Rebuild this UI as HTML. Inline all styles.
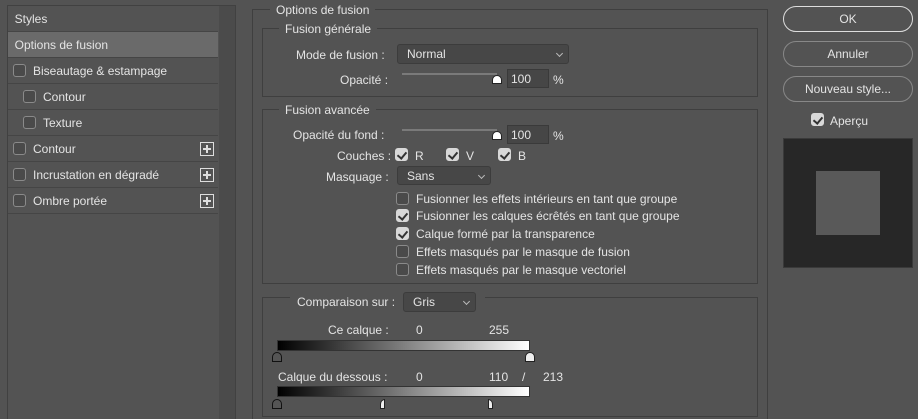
<!DOCTYPE html>
<html style="width:918px;height:419px;overflow:hidden"><head><meta charset="utf-8"><style>
*{margin:0;padding:0;box-sizing:border-box}
body{width:918px;height:419px;background:#535353;font-family:"Liberation Sans",sans-serif;font-size:12px;color:#e4e4e4;position:relative;overflow:hidden}
.a{position:absolute;white-space:nowrap}
.row{position:absolute;left:8px;width:210px;height:26px;border-bottom:1px solid #454545;line-height:27px}
.cb{position:absolute;width:13px;height:13px;border:1px solid #8a8a8a;border-radius:3px;background:#4a4a4a}
.cb.on{background:#d8d8d8;border-color:#d8d8d8}
.cb.on::after{content:"";position:absolute;left:3px;top:1px;width:4px;height:7px;border:solid #333;border-width:0 2px 2px 0;transform:rotate(40deg)}
.plus{position:absolute;left:192px;top:6px;width:14px;height:14px;border:1px solid #ddd}
.plus::before{content:"";position:absolute;left:2px;top:5px;width:8px;height:2px;background:#ddd}
.plus::after{content:"";position:absolute;left:5px;top:2px;width:2px;height:8px;background:#ddd}
.box{position:absolute;border:1px solid #3f3f3f}
.ttl{position:absolute;background:#535353;padding:0 6px;line-height:14px}
.dd{position:absolute;border:1px solid #3c3c3c;border-radius:3px;background:#474747;padding-left:9px;line-height:19px}
.dd::after{content:"";position:absolute;right:6px;top:6px;width:4px;height:4px;border:solid #bbb;border-width:0 1px 1px 0;transform:rotate(45deg)}
.inp{position:absolute;width:42px;height:19px;background:#464646;border:1px solid #3a3a3a;padding-left:3px;line-height:18px}
.track{position:absolute;height:2px;background:#7a7a7a}
.btn{position:absolute;left:783px;width:130px;height:26px;border:1px solid #888;border-radius:13px;text-align:center;line-height:25px}
.grad{position:absolute;left:277px;width:253px;height:11px;background:linear-gradient(90deg,#000,#fff);border:1px solid #333}
</style></head><body>
<div class="box" style="left:7px;top:5px;width:229px;height:420px;border-color:#414141"></div>
<div class="a" style="left:219px;top:6px;width:16px;height:413px;background:#4b4b4b"></div>
<div class="row" style="top:6px">&nbsp;&nbsp;Styles</div>
<div class="row" style="top:32px;background:#6a6a6a">&nbsp;&nbsp;Options de fusion</div>
<div class="row" style="top:58px"><div class="cb" style="left:5px;top:6px"></div><span class="a" style="left:25px">Biseautage &amp; estampage</span></div>
<div class="row" style="top:84px"><div class="cb" style="left:15px;top:6px"></div><span class="a" style="left:35px">Contour</span></div>
<div class="row" style="top:110px"><div class="cb" style="left:15px;top:6px"></div><span class="a" style="left:35px">Texture</span></div>
<div class="row" style="top:136px"><div class="cb" style="left:5px;top:6px"></div><span class="a" style="left:25px">Contour</span><div class="plus"></div></div>
<div class="row" style="top:162px"><div class="cb" style="left:5px;top:6px"></div><span class="a" style="left:25px">Incrustation en dégradé</span><div class="plus"></div></div>
<div class="row" style="top:188px"><div class="cb" style="left:5px;top:6px"></div><span class="a" style="left:25px">Ombre portée</span><div class="plus"></div></div>

<div class="box" style="left:252px;top:9px;width:516px;height:420px"></div>
<div class="ttl" style="left:270px;top:3px">Options de fusion</div>
<div class="box" style="left:262px;top:28px;width:496px;height:69px"></div>
<div class="ttl" style="left:279px;top:22px">Fusion générale</div>
<div class="a" style="left:296px;top:48px">Mode de fusion :</div>
<div class="dd" style="left:397px;top:44px;width:172px;height:20px">Normal</div>
<div class="a" style="left:340px;top:73px">Opacité :</div>
<div class="track" style="left:402px;top:73px;width:95px"></div>
<div class="a" style="left:492px;top:75px;width:10px;height:9px;background:#fff;border-radius:5px 5px 0 0;border:1px solid #222"></div>
<div class="inp" style="left:507px;top:69px">100</div>
<div class="a" style="left:553px;top:73px">%</div>

<div class="box" style="left:262px;top:109px;width:496px;height:175px"></div>
<div class="ttl" style="left:279px;top:103px">Fusion avancée</div>
<div class="a" style="left:293px;top:128px">Opacité du fond :</div>
<div class="track" style="left:402px;top:129px;width:95px"></div>
<div class="a" style="left:492px;top:131px;width:10px;height:9px;background:#fff;border-radius:5px 5px 0 0;border:1px solid #222"></div>
<div class="inp" style="left:507px;top:125px">100</div>
<div class="a" style="left:553px;top:129px">%</div>
<div class="a" style="left:337px;top:149px">Couches :</div>
<div class="cb on" style="left:395px;top:148px"></div><div class="a" style="left:415px;top:149px">R</div>
<div class="cb on" style="left:446px;top:148px"></div><div class="a" style="left:466px;top:149px">V</div>
<div class="cb on" style="left:498px;top:148px"></div><div class="a" style="left:518px;top:149px">B</div>
<div class="a" style="left:326px;top:170px">Masquage :</div>
<div class="dd" style="left:397px;top:166px;width:94px;height:19px">Sans</div>
<div class="cb" style="left:396px;top:192px"></div><div class="a" style="left:416px;top:192px">Fusionner les effets intérieurs en tant que groupe</div>
<div class="cb on" style="left:396px;top:209px"></div><div class="a" style="left:416px;top:209px">Fusionner les calques écrêtés en tant que groupe</div>
<div class="cb on" style="left:396px;top:227px"></div><div class="a" style="left:416px;top:227px">Calque formé par la transparence</div>
<div class="cb" style="left:396px;top:245px"></div><div class="a" style="left:416px;top:245px">Effets masqués par le masque de fusion</div>
<div class="cb" style="left:396px;top:263px"></div><div class="a" style="left:416px;top:263px">Effets masqués par le masque vectoriel</div>

<div class="box" style="left:262px;top:297px;width:496px;height:120px"></div>
<div class="a" style="left:290px;top:290px;width:195px;height:22px;background:#535353"></div>
<div class="a" style="left:297px;top:295px">Comparaison sur :</div>
<div class="dd" style="left:403px;top:292px;width:73px;height:20px">Gris</div>
<div class="a" style="left:328px;top:323px">Ce calque :</div>
<div class="a" style="left:416px;top:323px">0</div>
<div class="a" style="left:489px;top:323px">255</div>
<div class="grad" style="top:340px"></div>
<div class="a" style="left:272px;top:352px;width:10px;height:10px;background:#555;border:1px solid #111;border-radius:5px 5px 0 0"></div>
<div class="a" style="left:525px;top:352px;width:10px;height:10px;background:#eee;border:1px solid #222;border-radius:5px 5px 0 0"></div>
<div class="a" style="left:278px;top:370px">Calque du dessous :</div>
<div class="a" style="left:416px;top:370px">0</div>
<div class="a" style="left:489px;top:370px">110</div>
<div class="a" style="left:522px;top:370px">/</div>
<div class="a" style="left:543px;top:370px">213</div>
<div class="grad" style="top:386px"></div>
<div class="a" style="left:272px;top:399px;width:10px;height:10px;background:#555;border:1px solid #111;border-radius:5px 5px 0 0"></div>
<div class="a" style="left:380px;top:399px;width:5px;height:10px;background:#eee;border:1px solid #222;border-radius:5px 0 0 0"></div>
<div class="a" style="left:488px;top:399px;width:5px;height:10px;background:#eee;border:1px solid #222;border-radius:0 5px 0 0"></div>

<div class="btn" style="top:6px;border-color:#ddd">OK</div>
<div class="btn" style="top:41px">Annuler</div>
<div class="btn" style="top:76px">Nouveau style...</div>
<div class="cb on" style="left:811px;top:113px"></div><div class="a" style="left:830px;top:114px">Aperçu</div>
<div class="a" style="left:783px;top:138px;width:130px;height:130px;background:#272727;border:1px solid #3a3a3a"></div>
<div class="a" style="left:816px;top:171px;width:64px;height:64px;background:#595959"></div>
</body></html>
